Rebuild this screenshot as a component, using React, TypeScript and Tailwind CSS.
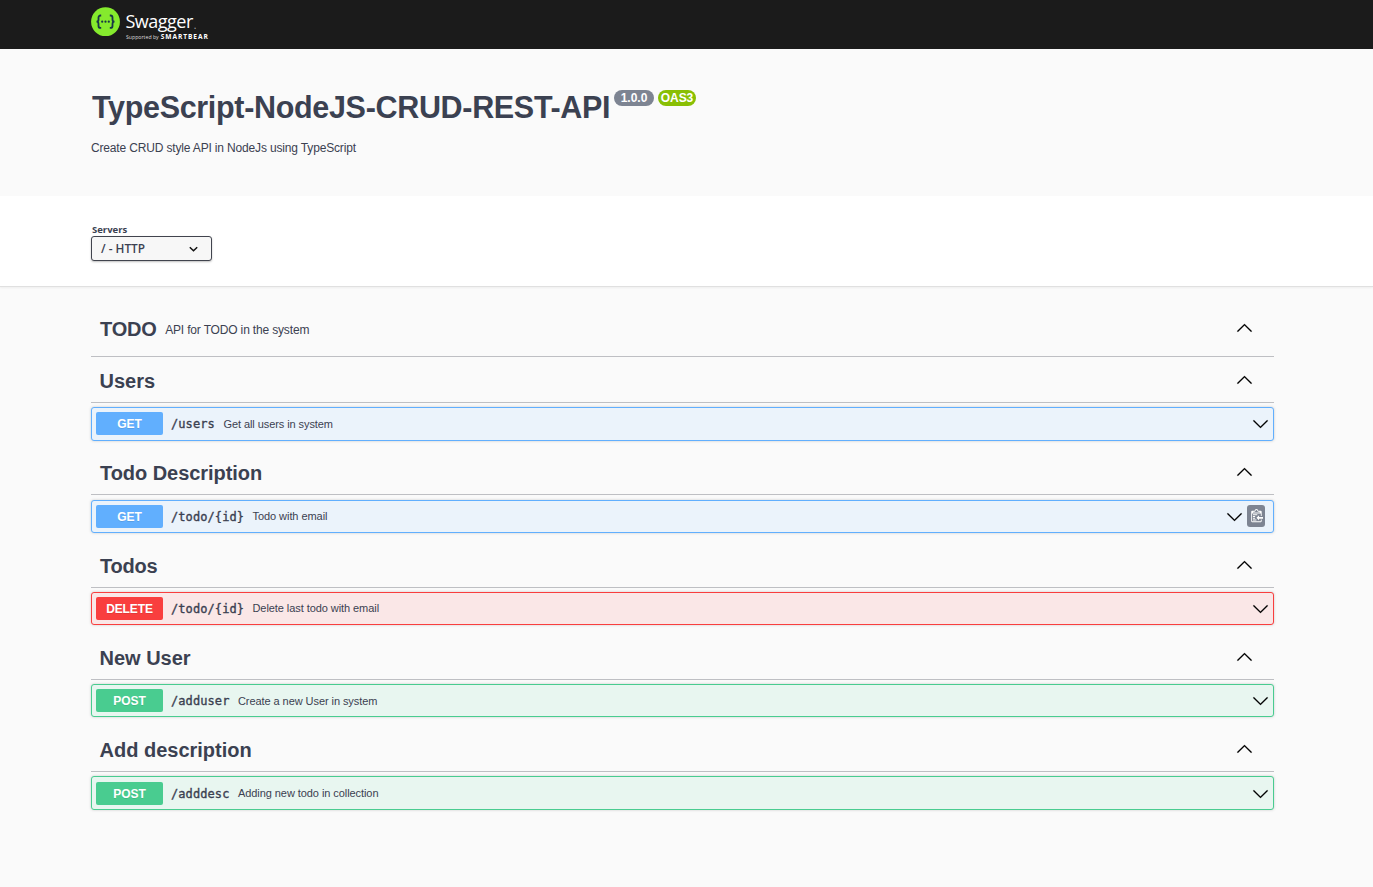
import React from "react";

type Op = {
  tag: string;
  tagClass: string;
  headClass: string;
  rowClass: string;
  method: string;
  methodClass: string;
  path: string;
  pathClass: string;
  summary: string;
  summaryClass: string;
  copy?: boolean;
};

const GET_ROW = "border-[#61affe] bg-[#ebf3fb]";
const DEL_ROW = "border-[#f93e3e] bg-[#fae7e7]";
const POST_ROW = "border-[#49cc90] bg-[#e8f6f0]";

const ops: Op[] = [
  { tag: "Users", tagClass: "pl-[8.5px]", headClass: "h-[46px] mb-[4px]", rowClass: `h-[34px] ${GET_ROW}`, method: "GET", methodClass: "bg-[#61affe]", path: "/users", pathClass: "w-[44.5px]", summary: "Get all users in system", summaryClass: "leading-[25px] tracking-[-0.08px]" },
  { tag: "Todo Description", tagClass: "pl-[9px] tracking-[-0.05px]", headClass: "h-[54px] pt-[8px] mb-[5px]", rowClass: `h-[33px] ${GET_ROW}`, method: "GET", methodClass: "bg-[#61affe]", path: "/todo/{id}", pathClass: "w-[73.5px]", summary: "Todo with email", summaryClass: "leading-[23px] tracking-[-0.06px]", copy: true },
  { tag: "Todos", tagClass: "pl-[9px] tracking-[-0.2px]", headClass: "h-[55px] pt-[9px] mb-[4px]", rowClass: `h-[33px] ${DEL_ROW}`, method: "DELETE", methodClass: "bg-[#f93e3e]", path: "/todo/{id}", pathClass: "w-[73.5px]", summary: "Delete last todo with email", summaryClass: "leading-[23px] tracking-[-0.07px]" },
  { tag: "New User", tagClass: "pl-[8.5px]", headClass: "h-[55px] pt-[9px] mb-[4px]", rowClass: `h-[33px] ${POST_ROW}`, method: "POST", methodClass: "bg-[#49cc90]", path: "/adduser", pathClass: "w-[59px]", summary: "Create a new User in system", summaryClass: "leading-[25px] tracking-[-0.07px]" },
  { tag: "Add description", tagClass: "pl-[8.5px]", headClass: "h-[55px] pt-[9px] mb-[4px]", rowClass: `h-[34px] pt-[5px] ${POST_ROW}`, method: "POST", methodClass: "bg-[#49cc90]", path: "/adddesc", pathClass: "w-[59px]", summary: "Adding new todo in collection", summaryClass: "leading-[23px] tracking-[-0.07px]" },
];

function Chevron({ up = false }: { up?: boolean }) {
  return (
    <svg width="17" height="17" viewBox="0 0 20 20" className={up ? "shrink-0" : "shrink-0 rotate-180"} fill="#000" stroke="#000" strokeWidth="0.2">
      <path d="M17.418 14.908c.272.281.701.281.969 0s.268-.736 0-1.017l-7.908-7.83c-.27-.268-.707-.268-.979 0l-7.908 7.83c-.268.281-.268.736 0 1.017s.701.281.969 0L10 7.767l7.418 7.141z" />
    </svg>
  );
}

function Logo() {
  return (
    <div className="flex items-start pt-[7px] text-white">
      <svg width="29" height="30" viewBox="0 0 29 30" fill="none">
        <circle cx="14.5" cy="14.7" r="14.4" fill="#85ea2d" />
        <g stroke="#173647" strokeWidth="1.8">
          <path d="M10.2 8.5h-.7c-1.3 0-2 .7-2 2v1.9c0 1.4-.6 2.3-2 2.3 1.4 0 2 .9 2 2.3v1.9c0 1.3.7 2 2 2h.7" />
          <path d="M18.8 8.5h.7c1.3 0 2 .7 2 2v1.9c0 1.4.6 2.3 2 2.3-1.4 0-2 .9-2 2.3v1.9c0 1.3-.7 2-2 2h-.7" />
        </g>
        <g fill="#173647">
          <circle cx="11.2" cy="14.7" r="1.1" />
          <circle cx="14.5" cy="14.7" r="1.1" />
          <circle cx="17.8" cy="14.7" r="1.1" />
        </g>
      </svg>
      <div className="flex flex-col pl-[5px]">
        <div className="mt-[3px] flex h-[22px] items-center pl-[0.5px] font-['Open_Sans',sans-serif] text-[18px] leading-[22px] tracking-[-0.5px]">
          Swagger<span className="pt-[7px] pl-px text-[10px] leading-[10px] text-[#aaa]">.</span>
        </div>
        <div className="mt-px flex h-[8px] items-center gap-[2px] pl-px font-['Open_Sans',sans-serif] leading-[8px] whitespace-nowrap">
          <span className="text-[5.2px] text-[#ddd]">Supported by</span>
          <span className="text-[6.6px] font-bold tracking-[0.95px]">SMARTBEAR</span>
        </div>
      </div>
    </div>
  );
}

export default function App() {
  return (
    <div className="h-[887px] w-[1373px] overflow-hidden bg-[#fafafa] font-['Liberation_Sans',Arial,sans-serif] text-[#3b4151]">
      <header className="h-[49px] bg-[#1b1b1b] pl-[91px]">
        <Logo />
      </header>

      <section className="h-[147px] pt-[38px] pl-[92px]">
        <div className="flex items-start">
          <h1 className="w-[518px] text-[30.5px] leading-[40px] font-bold tracking-[-0.32px] whitespace-nowrap">TypeScript-NodeJS-CRUD-REST-API</h1>
          <span className="mt-[3px] ml-[4px] flex h-[16px] w-[40px] items-center justify-center rounded-full bg-[#7d8492] text-[12px] font-bold text-white">1.0.0</span>
          <span className="mt-[3px] ml-[4px] flex h-[16px] w-[38px] items-center justify-center rounded-full bg-[#89bf04] text-[12px] font-bold tracking-[-0.1px] text-white">OAS3</span>
        </div>
        <p className="mt-[13px] -ml-px text-[12px] leading-[16px] tracking-[-0.16px]">Create CRUD style API in NodeJs using TypeScript</p>
      </section>

      <section className="h-[91px] border-b border-[#e0e0e0] bg-white pt-[28px] pl-[91px] shadow-[0_1px_2px_rgba(0,0,0,0.05)]">
        <div className="h-[12px] pl-px font-['Open_Sans',sans-serif] text-[9.5px] leading-[12px] font-bold">Servers</div>
        <div className="flex h-[25px] w-[121px] items-center justify-between rounded-[3px] border border-[#41444e] bg-[#f7f7f7] pr-[12px] pl-[9px] shadow-[0_1px_2px_rgba(0,0,0,0.25)]">
          <span className="font-['Open_Sans',sans-serif] text-[11.8px] font-semibold">/ - HTTP</span>
          <svg width="11" height="8" viewBox="0 0 11 8" fill="none" stroke="#111" strokeWidth="1.5">
            <path d="M1.8 2.2 5.5 5.8 9.2 2.2" />
          </svg>
        </div>
      </section>

      <main className="w-[1274px] pl-[91px]">
        <div className="flex h-[70px] items-center border-b border-[#bebfc3] pt-[12px] pr-[21px] pl-[9px]">
          <h2 className="pt-[2px] text-[20px] leading-[24px] font-bold tracking-[-0.2px]">TODO</h2>
          <span className="grow pt-[4px] pl-[8.5px] text-[12px] leading-[16px] tracking-[-0.16px]">API for TODO in the system</span>
          <Chevron up />
        </div>
        {ops.map((op) => (
          <div key={op.tag}>
            <div className={`flex items-center border-b border-[#bebfc3] pr-[21px] ${op.headClass}`}>
              <h2 className={`grow pt-[2px] text-[20px] leading-[24px] font-bold ${op.tagClass}`}>{op.tag}</h2>
              <Chevron up />
            </div>
            <div className={`flex items-start rounded-[3px] border pt-[4px] pr-[4px] pl-[4px] shadow-[0_0_3px_rgba(0,0,0,0.19)] ${op.rowClass}`}>
              <span className={`flex h-[23px] w-[67px] items-center justify-center rounded-[2px] text-[12px] font-bold tracking-[-0.1px] text-white [text-shadow:0_1px_0_rgba(0,0,0,0.1)] ${op.methodClass}`}>{op.method}</span>
              <span className={`ml-[8px] h-[23px] shrink-0 font-['DejaVu_Sans_Mono',monospace] text-[12px] leading-[24px] tracking-[0.08px] whitespace-nowrap [-webkit-text-stroke:0.35px_#3b4151] ${op.pathClass}`}>{op.path}</span>
              <span className={`ml-[8px] grow text-[11px] whitespace-nowrap ${op.summaryClass}`}>{op.summary}</span>
              <span className="flex h-[24px] items-center gap-[4px]">
                <Chevron />
                {op.copy && (
                  <span className="mr-[4px] -mt-[2px] flex h-[22px] w-[18px] items-center justify-center rounded-[3px] bg-[#7d8492]">
                    <svg width="14" height="14" viewBox="0 0 15 16" fill="#fff" className="shrink-0">
                      <path fillRule="evenodd" d="M4 12h4v1H4v-1zm5-6H4v1h5V6zm2 3V7l-3 3 3 3v-2h5V9h-5zM6.5 8H4v1h2.500V8zM4 11h2.500v-1H4v1zm9 1h1v2c-.020.280-.110.520-.300.700-.190.180-.420.280-.700.300H3c-.550 0-1-.450-1-1V3c0-.550.450-1 1-1h3c0-1.110.890-2 2-2 1.110 0 2 .890 2 2h3c.550 0 1 .450 1 1v5h-1V5H3v9h10v-2zM4 4h8c0-.550-.450-1-1-1h-1c-.550 0-1-.450-1-1s-.450-1-1-1-1 .450-1 1-.450 1-1 1H5c-.550 0-1 .450-1 1z" />
                    </svg>
                  </span>
                )}
              </span>
            </div>
          </div>
        ))}
      </main>
    </div>
  );
}
